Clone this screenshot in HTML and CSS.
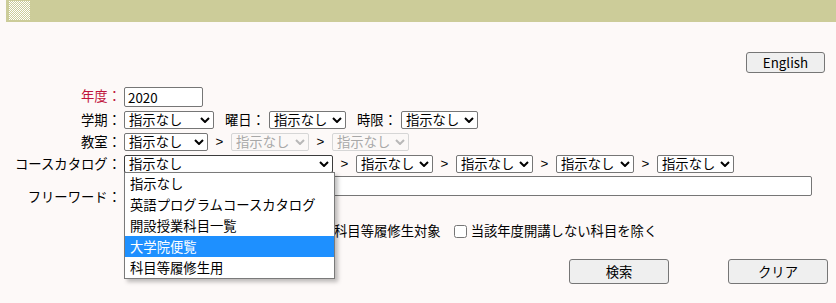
FILE: index.html
```html
<!DOCTYPE html>
<html lang="ja">
<head>
<meta charset="utf-8">
<title>シラバス検索</title>
<link rel="stylesheet" href="styles.css">
</head>
<body>
<div class="topbar"><div class="logo"></div></div>

<div class="lang-row"><button class="btn btn-en" type="button">English</button></div>

<form class="search">
  <div class="row row-first">
    <div class="lbl lbl-red">年度：</div>
    <input class="txt txt-year" type="text" value="2020">
  </div>

  <div class="row">
    <div class="lbl">学期：</div>
    <div class="sel w90"><span>指示なし</span><svg class="chev" viewBox="0 0 10 6"><path d="M1 1l4 4 4-4"/></svg></div>
    <div class="lbl-in">曜日：</div>
    <div class="sel w77"><span>指示なし</span><svg class="chev" viewBox="0 0 10 6"><path d="M1 1l4 4 4-4"/></svg></div>
    <div class="lbl-in">時限：</div>
    <div class="sel w77"><span>指示なし</span><svg class="chev" viewBox="0 0 10 6"><path d="M1 1l4 4 4-4"/></svg></div>
  </div>

  <div class="row">
    <div class="lbl">教室：</div>
    <div class="sel w84"><span>指示なし</span><svg class="chev" viewBox="0 0 10 6"><path d="M1 1l4 4 4-4"/></svg></div>
    <span class="sep">&gt;</span>
    <div class="sel sel-off w78"><span>指示なし</span><svg class="chev" viewBox="0 0 10 6"><path d="M1 1l4 4 4-4"/></svg></div>
    <span class="sep">&gt;</span>
    <div class="sel sel-off w77"><span>指示なし</span><svg class="chev" viewBox="0 0 10 6"><path d="M1 1l4 4 4-4"/></svg></div>
  </div>

  <div class="row">
    <div class="lbl">コースカタログ：</div>
    <div class="sel sel-open w209">
      <span>指示なし</span><svg class="chev" viewBox="0 0 10 6"><path d="M1 1l4 4 4-4"/></svg>
      <ul class="menu">
        <li>指示なし</li>
        <li>英語プログラムコースカタログ</li>
        <li>開設授業科目一覧</li>
        <li class="hl">大学院便覧</li>
        <li>科目等履修生用</li>
      </ul>
    </div>
    <span class="sep">&gt;</span>
    <div class="sel w77"><span>指示なし</span><svg class="chev" viewBox="0 0 10 6"><path d="M1 1l4 4 4-4"/></svg></div>
    <span class="sep">&gt;</span>
    <div class="sel w77"><span>指示なし</span><svg class="chev" viewBox="0 0 10 6"><path d="M1 1l4 4 4-4"/></svg></div>
    <span class="sep">&gt;</span>
    <div class="sel w78"><span>指示なし</span><svg class="chev" viewBox="0 0 10 6"><path d="M1 1l4 4 4-4"/></svg></div>
    <span class="sep">&gt;</span>
    <div class="sel w77"><span>指示なし</span><svg class="chev" viewBox="0 0 10 6"><path d="M1 1l4 4 4-4"/></svg></div>
  </div>

  <div class="row row-free">
    <div class="lbl lbl-free">フリーワード：</div>
    <input class="txt txt-free" type="text">
  </div>

  <div class="row row-checks">
    <div class="lbl"></div>
    <div class="chk-gap"></div>
    <label class="chk"><input type="checkbox"><span>科目等履修生対象</span></label>
    <label class="chk chk-last"><input type="checkbox"><span>当該年度開講しない科目を除く</span></label>
  </div>

  <div class="actions">
    <button class="btn btn-act" type="button">検索</button>
    <button class="btn btn-act" type="button">クリア</button>
  </div>
</form>
</body>
</html>
```

FILE: styles.css
```css
html, body {
  margin: 0;
  padding: 0;
  background: #fdf9f8;
}
html {
  min-height: 100%;
}
body {
  min-height: 303px;
  font-family: "Noto Sans CJK JP", "Noto Sans", sans-serif;
  font-size: 13.33px;
  line-height: 18px;
  color: #000;
}

.topbar {
  margin-left: 6px;
  height: 22px;
  background: #cccc99;
  padding: 1px 0 0 3px;
  box-sizing: border-box;
}
.logo {
  width: 21px;
  height: 19px;
  background: repeating-conic-gradient(#cccc99 0 25%, #ffffff 0 50%) 0 0 / 2px 2px;
}

.lang-row {
  display: flex;
  justify-content: flex-end;
  padding-right: 11px;
  margin-top: 30px;
}

.btn {
  font-family: "Noto Sans CJK JP", "Noto Sans", sans-serif;
  font-size: 13.33px;
  line-height: 16px;
  color: #000;
  background: #efefef;
  border: 1px solid #767676;
  border-radius: 3px;
  padding: 0;
  box-sizing: border-box;
}
.btn-en {
  width: 79px;
  height: 21px;
}

.search {
  margin-top: 14px;
}

.row {
  display: flex;
  align-items: center;
  height: 22px;
}
.row-first {
  align-items: flex-start;
}

.lbl {
  width: 121px;
  flex: none;
  text-align: right;
  margin-right: 3px;
  white-space: nowrap;
}
.lbl-red {
  color: #c0143c;
}
.lbl-in {
  margin: 0 4px 0 11px;
  white-space: nowrap;
}

.txt {
  font-family: "Noto Sans CJK JP", "Noto Sans", sans-serif;
  font-size: 13.33px;
  height: 20px;
  box-sizing: border-box;
  border: 1px solid #767676;
  border-radius: 2px;
  background: #fff;
  padding: 0 3px;
  margin: 0;
  color: #000;
}
.txt-year {
  width: 79px;
}

.sel {
  position: relative;
  flex: none;
  display: flex;
  align-items: center;
  justify-content: space-between;
  height: 18px;
  box-sizing: border-box;
  border: 1px solid #767676;
  border-radius: 2px;
  background: #fff;
  padding: 0 3px 0 4px;
  white-space: nowrap;
}
.sel span {
  line-height: 16px;
}
.chev {
  width: 10px;
  height: 6px;
  fill: none;
  stroke: #000;
  stroke-width: 2;
}
.sel-off {
  border-color: #d6d6d6;
  background: #fbf8f7;
  color: #a8a8a8;
}
.sel-off .chev {
  stroke: #b8b8b8;
}
.sel-open {
  border-color: #3c3c3c;
}

.w77 { width: 77px; }
.w78 { width: 78px; }
.w84 { width: 84px; }
.w90 { width: 90px; }
.w209 { width: 209px; }

.sep {
  width: 23px;
  flex: none;
  text-align: center;
  font-family: "Liberation Sans", sans-serif;
}

.menu {
  position: absolute;
  left: -1px;
  top: 100%;
  width: 211px;
  margin: 0;
  padding: 0;
  list-style: none;
  background: #fff;
  border: 1px solid #7a7a7a;
  box-sizing: border-box;
  box-shadow: 3px 3px 4px rgba(0, 0, 0, 0.25);
  z-index: 5;
}
.menu li {
  height: 21px;
  line-height: 21px;
  padding-left: 5px;
}
.menu li.hl {
  background: #1e90ff;
  color: #fff;
}

.row-free {
  align-items: flex-start;
  height: auto;
}
.lbl-free {
  padding-top: 13px;
}
.txt-free {
  margin-top: 1px;
  width: 688px;
}

.row-checks {
  margin-top: 15px;
  height: 20px;
}
.chk-gap {
  width: 193px;
  flex: none;
}
.chk {
  display: flex;
  align-items: center;
  white-space: nowrap;
}
.chk input {
  width: 13px;
  height: 13px;
  margin: 0 4px 0 0;
}
.chk-last {
  margin-left: 13px;
}

.actions {
  display: flex;
  gap: 59px;
  padding-left: 569px;
  margin-top: 18px;
}
.btn-act {
  width: 100px;
  height: 25px;
}
```
